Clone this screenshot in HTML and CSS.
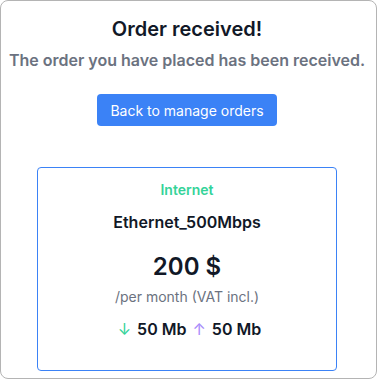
FILE: index.html
```html
<!DOCTYPE html>
<html>
<head>
<meta charset="utf-8">
<link rel="stylesheet" href="styles.css">
</head>
<body>
<div class="frame">
  <h1 class="title">Order received!</h1>
  <p class="subtitle">The order you have placed has been received.</p>
  <button class="btn">Back to manage orders</button>
  <div class="card">
    <div class="category">Internet</div>
    <div class="name">Ethernet_500Mbps</div>
    <div class="price">200 $</div>
    <div class="period">/per month (VAT incl.)</div>
    <div class="speeds">
      <span class="arrow down">↓</span><span class="val">50 Mb</span>
      <span class="arrow up">↑</span><span class="val">50 Mb</span>
    </div>
  </div>
</div>
</body>
</html>
```

FILE: styles.css
```css
html, body {
  margin: 0;
  padding: 0;
  background: #ffffff;
}
body {
  font-family: Inter, "Noto Sans", sans-serif;
  color: #111827;
}
.frame {
  box-sizing: border-box;
  width: 377px;
  height: 379px;
  border: 1px solid #b4b4b4;
  border-radius: 8px;
  display: flex;
  flex-direction: column;
  align-items: center;
  padding-top: 14px;
  padding-right: 3px;
}
.title {
  margin: 0;
  font-size: 20px;
  font-weight: 600;
  line-height: 28px;
  color: #111827;
}
.subtitle {
  margin: 6px 0 0;
  font-size: 16px;
  font-weight: 600;
  line-height: 22px;
  color: #6b7280;
  white-space: nowrap;
}
.btn {
  margin-top: 23px;
  width: 180px;
  height: 32px;
  border: none;
  border-radius: 4px;
  background: #3b82f6;
  color: #ffffff;
  font-family: Inter, "Noto Sans", sans-serif;
  font-size: 14px;
  font-weight: 400;
  padding: 0;
}
.card {
  box-sizing: border-box;
  margin-top: 41px;
  width: 300px;
  height: 204px;
  border: 1px solid #3b82f6;
  border-radius: 4px;
  display: flex;
  flex-direction: column;
  align-items: center;
  padding-top: 13px;
}
.category {
  font-size: 14px;
  font-weight: 600;
  line-height: 18px;
  color: #34d399;
}
.name {
  margin-top: 12px;
  font-size: 16px;
  font-weight: 600;
  line-height: 22px;
  color: #111827;
}
.price {
  margin-top: 18px;
  font-size: 24px;
  font-weight: 600;
  line-height: 32px;
  color: #111827;
}
.period {
  margin-top: 4px;
  font-size: 14px;
  line-height: 20px;
  color: #6b7280;
}
.speeds {
  margin-top: 11px;
  padding-left: 5px;
  display: flex;
  align-items: center;
  gap: 6px;
  font-size: 16px;
  font-weight: 600;
  line-height: 22px;
  color: #111827;
}
.arrow {
  font-weight: 400;
  font-size: 16px;
}
.arrow.down { color: #34d399; }
.arrow.up { color: #a78bfa; }
```
